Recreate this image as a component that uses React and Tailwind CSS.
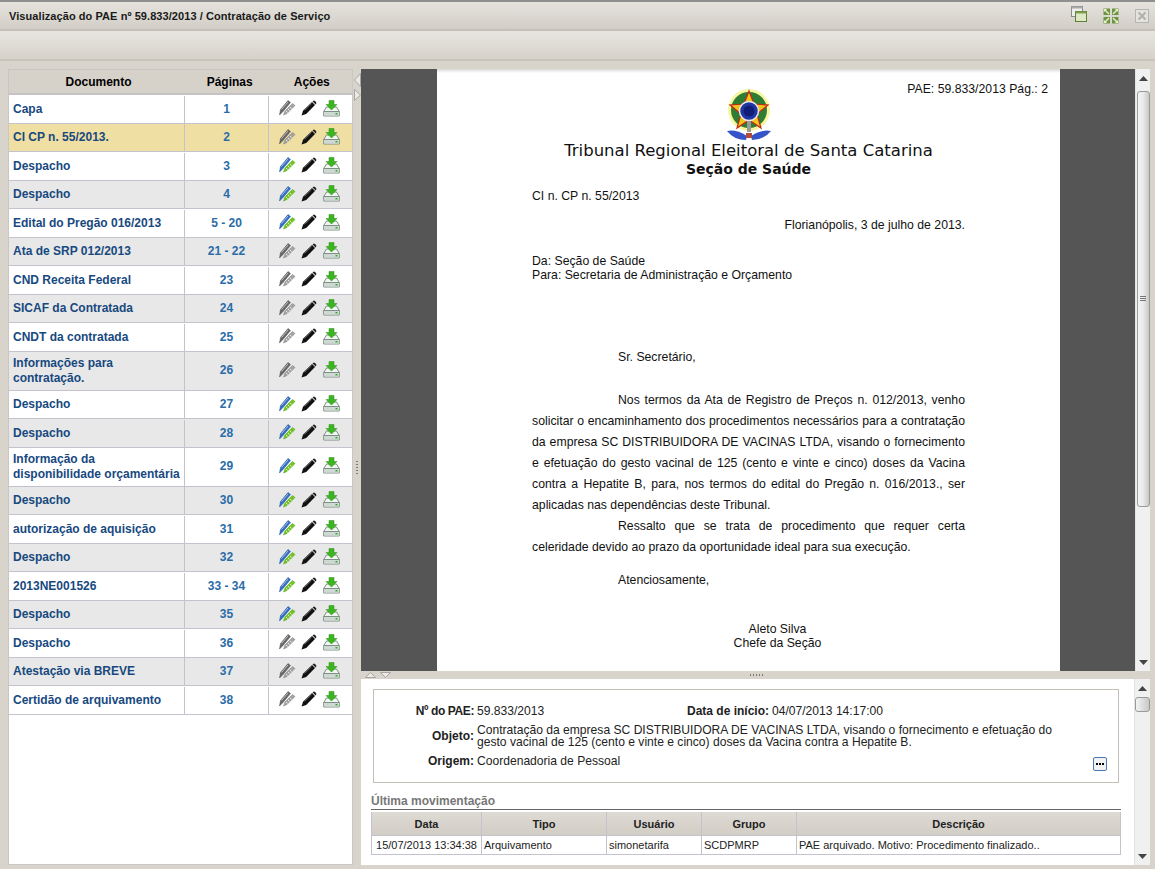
import React from "react";

const docs = [
  { nome: "Capa", pag: "1", ok: false },
  { nome: "CI CP n. 55/2013.", pag: "2", ok: false, sel: true },
  { nome: "Despacho", pag: "3", ok: true },
  { nome: "Despacho", pag: "4", ok: true },
  { nome: "Edital do Pregão 016/2013", pag: "5 - 20", ok: true },
  { nome: "Ata de SRP 012/2013", pag: "21 - 22", ok: false },
  { nome: "CND Receita Federal", pag: "23", ok: false },
  { nome: "SICAF da Contratada", pag: "24", ok: false },
  { nome: "CNDT da contratada", pag: "25", ok: false },
  { nome: "Informações para contratação.", pag: "26", ok: false, alto: true },
  { nome: "Despacho", pag: "27", ok: true },
  { nome: "Despacho", pag: "28", ok: true },
  { nome: "Informação da disponibilidade orçamentária", pag: "29", ok: true, alto: true },
  { nome: "Despacho", pag: "30", ok: true },
  { nome: "autorização de aquisição", pag: "31", ok: true },
  { nome: "Despacho", pag: "32", ok: true },
  { nome: "2013NE001526", pag: "33 - 34", ok: true },
  { nome: "Despacho", pag: "35", ok: true },
  { nome: "Despacho", pag: "36", ok: false },
  { nome: "Atestação via BREVE", pag: "37", ok: false },
  { nome: "Certidão de arquivamento", pag: "38", ok: false },
];

// Duas canetas cruzadas: cinza quando pendente, azul/verde quando assinado
function PensIcon({ ok }) {
  const a = ok ? "#2f6fc4" : "#666666";
  const b = ok ? "#72c81f" : "#a4a4a4";
  return (
    <svg width="18" height="18" viewBox="0 0 18 18">
      <path d="M1.5 16 L2.5 10.5 L10 1.5 L12.5 3.5 L5 12.5 Z" fill={a} stroke={ok ? "#1d4f96" : "#4f4f4f"} strokeWidth="0.5" />
      <path d="M3.5 10.5 L10 3" stroke="#e4e4e4" strokeWidth="0.7" />
      <path d="M5.5 16 L7 12 L14.5 4.5 L17 6.5 L9 14.5 Z" fill={b} stroke={ok ? "#4b9a12" : "#7c7c7c"} strokeWidth="0.5" />
      <path d="M8 12 L9.5 13.5 M10 10 L11.5 11.5 M12 8 L13.5 9.5" stroke="#fff" strokeWidth="0.8" />
    </svg>
  );
}

function PencilIcon() {
  return (
    <svg width="16" height="16" viewBox="0 0 16 16">
      <path d="M0.5 15.5 L2 10.8 L11 2 L14 5 L5.2 14 Z" fill="#111" />
      <path d="M12 1 Q13 0.2 14 1 L15 2 Q15.8 3 15 4 L14.6 4.4 L11.6 1.4 Z" fill="#222" />
      <path d="M3.6 10.4 L10.6 3.6" stroke="#777" strokeWidth="0.7" />
    </svg>
  );
}

function DiskIcon() {
  return (
    <svg width="17" height="17" viewBox="0 0 17 17">
      <path d="M3.5 7 L0.7 11.5 V16 H16.3 V11.5 L13.5 7 Z" fill="#f2f5f2" stroke="#6f8578" strokeWidth="0.9" />
      <path d="M0.7 11.5 H16.3" stroke="#6f8578" strokeWidth="0.9" />
      <rect x="1.2" y="12" width="14.6" height="3.5" fill="#cfd8d2" />
      <rect x="12.5" y="13" width="2" height="1.5" fill="#30b01f" />
      <path d="M6 0.5 H11 V4.5 H14 L8.5 10 L3 4.5 H6 Z" fill="#3cb521" stroke="#2a8f18" strokeWidth="0.5" />
    </svg>
  );
}

// Brasão simplificado da República
function Brasao() {
  return (
    <svg width="50" height="52" viewBox="0 0 50 52">
      <circle cx="25" cy="21" r="21" fill="#f6f6a0" />
      <circle cx="25" cy="21" r="18" fill="#2f7d32" />
      <path d="M25 2 L30 15 L44 16 L33 25 L37 39 L25 31 L13 39 L17 25 L6 16 L20 15 Z" fill="#f0c419" stroke="#c0281c" strokeWidth="1.2" />
      <circle cx="25" cy="22" r="9.5" fill="#2036a0" stroke="#e8e8f0" strokeWidth="1.5" />
      <circle cx="25" cy="22" r="5.5" fill="#101e78" />
      <path d="M23 32 H27 V43 H23 Z" fill="#9a9a9a" />
      <path d="M3 42 Q12 40 23 47 L22 51 Q10 51 3 42 Z" fill="#3554c8" />
      <path d="M47 42 Q38 40 27 47 L28 51 Q40 51 47 42 Z" fill="#3554c8" />
      <path d="M22 44 H28 V49 H22 Z" fill="#b04a3a" />
    </svg>
  );
}

function RestoreIcon() {
  return (
    <svg width="16" height="16" viewBox="0 0 16 16">
      <rect x="0.5" y="0.5" width="11" height="10" fill="#eee" stroke="#8a8a8a" />
      <rect x="0.5" y="0.5" width="11" height="2" fill="#aaa" />
      <rect x="4.5" y="5.5" width="11" height="10" fill="#dfe8c4" stroke="#5f7f35" />
      <rect x="4.5" y="5.5" width="11" height="2" fill="#7e9f4e" />
    </svg>
  );
}

function ExpandIcon() {
  return (
    <svg width="16" height="16" viewBox="0 0 16 16">
      <rect x="0.5" y="0.5" width="6.5" height="6.5" fill="#6f9440" />
      <rect x="9" y="0.5" width="6.5" height="6.5" fill="#6f9440" />
      <rect x="0.5" y="9" width="6.5" height="6.5" fill="#6f9440" />
      <rect x="9" y="9" width="6.5" height="6.5" fill="#6f9440" />
      <path d="M1 1 H4 L3 2 L6.5 5.5 L5.5 6.5 L2 3 L1 4 Z" fill="#e8f0d4" />
      <path d="M15 1 H12 L13 2 L9.5 5.5 L10.5 6.5 L14 3 L15 4 Z" fill="#e8f0d4" />
      <path d="M1 15 H4 L3 14 L6.5 10.5 L5.5 9.5 L2 13 L1 12 Z" fill="#e8f0d4" />
      <path d="M15 15 H12 L13 14 L9.5 10.5 L10.5 9.5 L14 13 L15 12 Z" fill="#e8f0d4" />
    </svg>
  );
}

function CloseIcon() {
  return (
    <svg width="14" height="14" viewBox="0 0 14 14">
      <rect x="0.5" y="0.5" width="13" height="13" fill="#e4e2dd" stroke="#b5b5b5" />
      <path d="M3.5 3.5 L10.5 10.5 M10.5 3.5 L3.5 10.5" stroke="#b0b0b0" strokeWidth="2" />
    </svg>
  );
}

function Seta({ dir }) {
  return (
    <div className="flex justify-center h-[18px] items-center shrink-0">
      <svg width="9" height="5" viewBox="0 0 9 5">
        <path d={dir === "up" ? "M4.5 0 L9 5 H0 Z" : "M0 0 H9 L4.5 5 Z"} fill="#444" />
      </svg>
    </div>
  );
}

function Linha({ children, className = "" }) {
  return <div className={"h-[21px] leading-[21px] text-justify [text-align-last:justify] " + className}>{children}</div>;
}

function Documento() {
  return (
    <div className="w-[623px] h-full bg-white overflow-hidden flex flex-col text-[12.25px] leading-[14px] text-[#111] [font-family:'Liberation_Sans',Arial,sans-serif]">
      <div className="h-[4px] shrink-0 bg-gradient-to-b from-[#d8d8d8] to-white" />
      <div className="text-right pr-[12px] pt-[9px] h-[16px] shrink-0 whitespace-nowrap">PAE: 59.833/2013 Pág.: 2</div>
      <div className="flex justify-center shrink-0">
        <Brasao />
      </div>
      <div className="text-center text-[16.5px] leading-[19px] shrink-0 [font-family:'DejaVu_Sans',sans-serif]">Tribunal Regional Eleitoral de Santa Catarina</div>
      <div className="text-center font-bold text-[14px] leading-[18px] shrink-0 [font-family:'DejaVu_Sans',sans-serif]">Seção de Saúde</div>
      <div className="mx-[95px] w-[433px]">
        <div className="mt-[11px]">CI n. CP n. 55/2013</div>
        <div className="mt-[15px] text-right">Florianópolis, 3 de julho de 2013.</div>
        <div className="mt-[22px]">Da: Seção de Saúde</div>
        <div>Para: Secretaria de Administração e Orçamento</div>
        <div className="mt-[68px] ml-[86px]">Sr. Secretário,</div>
        <div className="mt-[26px]">
          <Linha className="ml-[86px]">Nos termos da Ata de Registro de Preços n. 012/2013, venho</Linha>
          <Linha>solicitar o encaminhamento dos procedimentos necessários para a contratação</Linha>
          <Linha>da empresa SC DISTRIBUIDORA DE VACINAS LTDA, visando o fornecimento</Linha>
          <Linha>e efetuação do gesto vacinal de 125 (cento e vinte e cinco) doses da Vacina</Linha>
          <Linha>contra a Hepatite B, para, nos termos do edital do Pregão n. 016/2013., ser</Linha>
          <div className="h-[21px] leading-[21px]">aplicadas nas dependências deste Tribunal.</div>
          <Linha className="ml-[86px]">Ressalto que se trata de procedimento que requer certa</Linha>
          <div className="h-[21px] leading-[21px]">celeridade devido ao prazo da oportunidade ideal para sua execução.</div>
        </div>
        <div className="mt-[15px] ml-[86px]">Atenciosamente,</div>
        <div className="mt-[35px] text-center pl-[58px]">Aleto Silva</div>
        <div className="text-center pl-[58px]">Chefe da Seção</div>
      </div>
    </div>
  );
}

export default function App() {
  return (
    <div className="w-[1155px] h-[869px] overflow-hidden flex flex-col bg-[#d8d4cc] [font-family:'Liberation_Sans',Arial,sans-serif]">
      {/* Barra de título */}
      <div className="h-[31px] shrink-0 flex items-center pl-[9px] pr-[6px] border-t-2 border-[#8f8f8f] border-b-2 border-b-[#c4c0b8] bg-gradient-to-b from-[#e6e3de] to-[#d2cec6]">
        <span className="text-[11px] font-bold text-[#1a1a1a] tracking-[0.07px] pt-[2px]">Visualização do PAE nº 59.833/2013 / Contratação de Serviço</span>
        <div className="ml-auto flex items-start self-stretch">
          <div className="mt-[4px]"><RestoreIcon /></div>
          <div className="ml-[16px] mt-[6px]"><ExpandIcon /></div>
          <div className="ml-[16px] mt-[7px]"><CloseIcon /></div>
        </div>
      </div>
      {/* Barra de ferramentas */}
      <div className="h-[30px] shrink-0 border-b-2 border-[#c8c4bc] bg-gradient-to-b from-[#e8e5e0] to-[#d6d2ca]" />

      <div className="flex flex-1 min-h-0 pt-[8px] pb-[4px] pl-[8px] pr-[5px]">
        {/* Lista de documentos */}
        <div className="w-[345px] shrink-0 bg-white border border-[#c8c6c6] flex flex-col">
          <div className="h-[25px] shrink-0 flex items-center bg-[#d6d2ca] text-[12px] font-bold text-black border-b-2 border-[#c4c2c4]">
            <div className="w-[180px] text-center">Documento</div>
            <div className="w-[84px] text-center">Páginas</div>
            <div className="w-[81px] text-center">Ações</div>
          </div>
          {docs.map((d, i) => (
            <div
              key={i}
              className={
                "flex shrink-0 border-b border-[#c4c2cc] text-[12px] font-bold leading-[15px] pt-[0.5px] " +
                (d.alto ? "h-[39px] " : "h-[28.5px] ") +
                (d.sel ? "bg-[#f0dfa2]" : i % 2 === 1 ? "bg-[#e8e8e8]" : "bg-white")
              }
            >
              <div className="w-[176px] pl-[4px] pr-[3px] flex items-center text-[#17497f] border-r border-[#c4c2cc]">{d.nome}</div>
              <div className="w-[84px] flex items-center justify-center text-[#2a6ca8] border-r border-[#c4c2cc]">{d.pag}</div>
              <div className="flex-1 flex items-center pl-[9px] pb-[2px]">
                <PensIcon ok={d.ok} />
                <div className="ml-[5px]"><PencilIcon /></div>
                <div className="ml-[6px]"><DiskIcon /></div>
              </div>
            </div>
          ))}
        </div>

        {/* Divisor vertical */}
        <div className="w-[8px] shrink-0 flex flex-col items-center pt-[4px]">
          <svg width="7" height="14" viewBox="0 0 7 14"><path d="M6.5 0.5 V13.5 L0.5 7 Z" fill="#eceae6" stroke="#a8a6a0" /></svg>
          <svg className="mt-[2px]" width="7" height="12" viewBox="0 0 7 12"><path d="M0.5 0.5 V11.5 L6.5 6 Z" fill="#eceae6" stroke="#a8a6a0" /></svg>
          <div className="mt-[360px] w-[2px] h-[14px] border-y-0 [background:repeating-linear-gradient(#777_0_1px,transparent_1px_3px)]" />
        </div>

        <div className="flex-1 min-w-0 flex flex-col">
          {/* Visualizador */}
          <div className="h-[602px] shrink-0 flex">
            <div className="flex-1 bg-[#555555] flex justify-center pl-[1px]">
              <Documento />
            </div>
            <div className="w-[15px] shrink-0 bg-[#f0f0f0] flex flex-col border-l border-[#e4e4e4]">
              <Seta dir="up" />
              <div className="h-[416px] mt-[4px] mx-[0.5px] shrink-0 rounded-[3px] border border-[#9a9a9a] bg-gradient-to-r from-[#f4f4f4] via-[#e8e8e8] to-[#c8c8c8] flex flex-col items-center justify-center">
                <div className="w-[6px] h-[6px] [background:repeating-linear-gradient(#777_0_1px,transparent_1px_2px)]" />
              </div>
              <div className="mt-auto"><Seta dir="down" /></div>
            </div>
          </div>

          {/* Divisor horizontal */}
          <div className="h-[8px] shrink-0 flex items-center pl-[4px] bg-[#d8d4cc]">
            <svg width="11" height="6" viewBox="0 0 11 6"><path d="M0.5 5.5 L5.5 0.5 L10.5 5.5 Z" fill="#eceae6" stroke="#a8a6a0" /></svg>
            <svg className="ml-[4px]" width="11" height="6" viewBox="0 0 11 6"><path d="M0.5 0.5 H10.5 L5.5 5.5 Z" fill="#eceae6" stroke="#a8a6a0" /></svg>
            <div className="ml-[359px] w-[13px] h-[2px] [background:repeating-linear-gradient(90deg,#777_0_1px,transparent_1px_3px)]" />
          </div>

          {/* Painel de detalhes */}
          <div className="flex-1 min-h-0 flex bg-white">
            <div className="flex-1 min-w-0 pt-[10px] pl-[10px] pr-[13px]">
              <div className="ml-[2px] w-[746px] h-[94px] border border-[#c4c0b8] pt-[14px] text-[12.1px] leading-[12px] text-[#222]">
                <div className="flex h-[14px] items-center">
                  <div className="w-[100px] text-right font-bold text-[12px] tracking-[-0.4px]">Nº do PAE:</div>
                  <div className="ml-[3px] w-[192px]">59.833/2013</div>
                  <div className="w-[100px] text-right font-bold text-[12px]">Data de início:</div>
                  <div className="ml-[3px]">04/07/2013 14:17:00</div>
                </div>
                <div className="flex items-center mt-[6px]">
                  <div className="w-[100px] text-right font-bold text-[12px]">Objeto:</div>
                  <div className="ml-[3px] w-[590px]">Contratação da empresa SC DISTRIBUIDORA DE VACINAS LTDA, visando o fornecimento e efetuação do gesto vacinal de 125 (cento e vinte e cinco) doses da Vacina contra a Hepatite B.</div>
                </div>
                <div className="flex items-start mt-[6px] h-[14px] leading-[14px]">
                  <div className="w-[100px] text-right font-bold text-[12px]">Origem:</div>
                  <div className="ml-[3px]">Coordenadoria de Pessoal</div>
                  <div className="ml-auto mr-[11px] mt-[3px] w-[14px] h-[14px] rounded-[2px] border border-[#4a78b0] bg-[#f2f2f2] flex items-center justify-center gap-[1px]">
                    <span className="w-[2px] h-[2px] bg-black" />
                    <span className="w-[2px] h-[2px] bg-black" />
                    <span className="w-[2px] h-[2px] bg-black" />
                  </div>
                </div>
              </div>
              <div className="mt-[11px] text-[12px] leading-[14px] font-bold text-[#777] border-b border-[#666] pb-[1px] w-[750px]">Última movimentação</div>
              <div className="mt-[2px] w-[750px] border border-[#c4c2cc] border-t-0 text-[11px] text-[#222]">
                <div className="flex h-[24px] font-bold leading-[25px] bg-gradient-to-b from-[#dedad4] to-[#d2cec6] border-b border-[#c4c2cc]">
                  <div className="w-[109px] text-center">Data</div>
                  <div className="w-[125px] text-center border-l border-[#c4c2cc]">Tipo</div>
                  <div className="w-[95px] text-center border-l border-[#c4c2cc]">Usuário</div>
                  <div className="w-[95px] text-center border-l border-[#c4c2cc]">Grupo</div>
                  <div className="flex-1 text-center border-l border-[#c4c2cc]">Descrição</div>
                </div>
                <div className="flex h-[18px] leading-[18px]">
                  <div className="w-[109px] text-center">15/07/2013 13:34:38</div>
                  <div className="w-[125px] pl-[2px] border-l border-[#c4c2cc]">Arquivamento</div>
                  <div className="w-[95px] pl-[2px] border-l border-[#c4c2cc]">simonetarifa</div>
                  <div className="w-[95px] pl-[2px] border-l border-[#c4c2cc]">SCDPMRP</div>
                  <div className="flex-1 pl-[2px] border-l border-[#c4c2cc]">PAE arquivado. Motivo: Procedimento finalizado..</div>
                </div>
              </div>
            </div>
            <div className="w-[16px] shrink-0 bg-[#f0f0f0] flex flex-col border-l border-[#e4e4e4]">
              <Seta dir="up" />
              <div className="h-[15px] shrink-0 rounded-[3px] border border-[#9a9a9a] bg-gradient-to-r from-[#f4f4f4] to-[#c8c8c8]" />
              <div className="mt-auto"><Seta dir="down" /></div>
            </div>
          </div>
        </div>
      </div>
    </div>
  );
}
